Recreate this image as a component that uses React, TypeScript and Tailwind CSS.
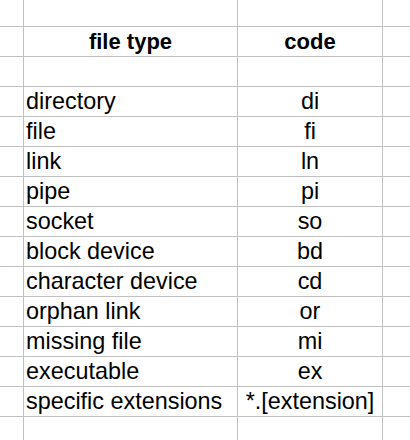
import React from "react";

const rows: [string, string][] = [
  ["directory", "di"],
  ["file", "fi"],
  ["link", "ln"],
  ["pipe", "pi"],
  ["socket", "so"],
  ["block device", "bd"],
  ["character device", "cd"],
  ["orphan link", "or"],
  ["missing file", "mi"],
  ["executable", "ex"],
  ["specific extensions", "*.[extension]"],
];

const line = "border-[#c0c0c0]";

function Row({
  a,
  b,
  bold,
  h = "h-[30px]",
  last,
}: {
  a?: string;
  b?: string;
  bold?: boolean;
  h?: string;
  last?: boolean;
}) {
  const bb = last ? "" : "border-b";
  const weight = bold ? "font-bold text-[22px]" : "font-normal text-[23.4px]";
  return (
    <div className="flex">
      <div className={`w-[24px] shrink-0 border-r ${bb} ${line} ${h}`} />
      <div
        className={`w-[214px] shrink-0 border-r ${bb} ${line} ${h} ${weight} leading-[29px] ${
          bold ? "text-center" : "pl-[2px] text-left"
        } whitespace-nowrap overflow-visible`}
      >
        {a}
      </div>
      <div
        className={`w-[145px] shrink-0 border-r ${bb} ${line} ${h} ${weight} leading-[29px] text-center whitespace-nowrap`}
      >
        {b}
      </div>
      <div className={`flex-1 ${bb} ${line} ${h}`} />
    </div>
  );
}

export default function App() {
  return (
    <div
      className="w-[410px] h-[440px] overflow-hidden bg-white text-black"
      style={{ fontFamily: '"Liberation Sans", Arial, sans-serif' }}
    >
      <Row h="h-[27px]" />
      <Row a="file type" b="code" bold />
      <Row />
      {rows.map(([a, b]) => (
        <Row key={a} a={a} b={b} />
      ))}
      <Row h="h-[23px]" last />
    </div>
  );
}
